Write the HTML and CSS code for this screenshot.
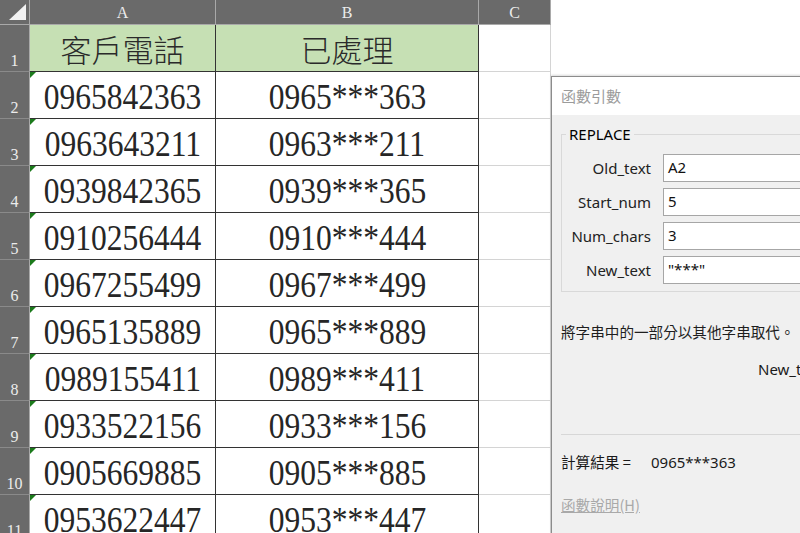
FILE: index.html
```html
<!DOCTYPE html>
<html lang="zh-Hant">
<head>
<meta charset="utf-8">
<title>REPLACE</title>
<link rel="stylesheet" href="styles.css">
</head>
<body>
<div class="sheet">
  <div class="corner"><svg width="30" height="25" viewBox="0 0 30 25"><polygon points="9,20 26,20 26,4" fill="#f2f2f2"/></svg></div>
  <div class="colhead">A</div>
  <div class="colhead">B</div>
  <div class="colhead last">C</div>

  <div class="rowhead">1</div>
  <div class="cell head">客戶電話</div>
  <div class="cell head colb">已處理</div>
  <div class="cell colc"></div>

  <div class="rowhead">2</div>
  <div class="cell warn"><span class="v">0965842363</span></div>
  <div class="cell colb"><span class="v">0965***363</span></div>
  <div class="cell colc"></div>

  <div class="rowhead">3</div>
  <div class="cell warn"><span class="v">0963643211</span></div>
  <div class="cell colb"><span class="v">0963***211</span></div>
  <div class="cell colc"></div>

  <div class="rowhead">4</div>
  <div class="cell warn"><span class="v">0939842365</span></div>
  <div class="cell colb"><span class="v">0939***365</span></div>
  <div class="cell colc"></div>

  <div class="rowhead">5</div>
  <div class="cell warn"><span class="v">0910256444</span></div>
  <div class="cell colb"><span class="v">0910***444</span></div>
  <div class="cell colc"></div>

  <div class="rowhead">6</div>
  <div class="cell warn"><span class="v">0967255499</span></div>
  <div class="cell colb"><span class="v">0967***499</span></div>
  <div class="cell colc"></div>

  <div class="rowhead">7</div>
  <div class="cell warn"><span class="v">0965135889</span></div>
  <div class="cell colb"><span class="v">0965***889</span></div>
  <div class="cell colc"></div>

  <div class="rowhead">8</div>
  <div class="cell warn"><span class="v">0989155411</span></div>
  <div class="cell colb"><span class="v">0989***411</span></div>
  <div class="cell colc"></div>

  <div class="rowhead">9</div>
  <div class="cell warn"><span class="v">0933522156</span></div>
  <div class="cell colb"><span class="v">0933***156</span></div>
  <div class="cell colc"></div>

  <div class="rowhead">10</div>
  <div class="cell warn"><span class="v">0905669885</span></div>
  <div class="cell colb"><span class="v">0905***885</span></div>
  <div class="cell colc"></div>

  <div class="rowhead">11</div>
  <div class="cell warn"><span class="v">0953622447</span></div>
  <div class="cell colb"><span class="v">0953***447</span></div>
  <div class="cell colc"></div>
</div>

<div class="dialog">
  <div class="titlebar">函數引數</div>
  <div class="dbody">
    <fieldset class="args">
      <legend>REPLACE</legend>
      <div class="arggrid">
        <label class="arglabel">Old_text</label><div class="argbox">A2</div>
        <label class="arglabel">Start_num</label><div class="argbox">5</div>
        <label class="arglabel">Num_chars</label><div class="argbox">3</div>
        <label class="arglabel">New_text</label><div class="argbox">"***"</div>
      </div>
    </fieldset>
    <p class="desc">將字串中的一部分以其他字串取代。</p>
    <p class="argdesc">New_text</p>
    <div class="sep"></div>
    <p class="result"><span class="reslabel">計算結果 =</span><span>0965***363</span></p>
    <a class="help">函數說明(H)</a>
  </div>
</div>
</body>
</html>
```

FILE: styles.css
```css
html, body {
  margin: 0;
  padding: 0;
  background: #ffffff;
  width: 800px;
  height: 533px;
  overflow: hidden;
}

.sheet {
  display: grid;
  grid-template-columns: 30px 186px 263px 72px;
  grid-template-rows: 25px repeat(11, 47px);
  width: 551px;
}

.corner {
  background: #6a6a6a;
  border-right: 1px solid #a9a9a9;
  border-bottom: 1px solid #a9a9a9;
  box-sizing: border-box;
  overflow: hidden;
}
.corner svg { display: block; }

.colhead {
  background: #6a6a6a;
  border-right: 1px solid #a9a9a9;
  border-bottom: 1px solid #a9a9a9;
  box-sizing: border-box;
  color: #ececec;
  font-family: "Liberation Serif", serif;
  font-size: 16px;
  display: flex;
  align-items: center;
  justify-content: center;
  padding-top: 1px;
}

.rowhead {
  background: #6a6a6a;
  border-right: 1px solid #a9a9a9;
  border-bottom: 1px solid #8a8a8a;
  box-sizing: border-box;
  color: #ececec;
  font-family: "Liberation Serif", serif;
  font-size: 16px;
  display: flex;
  align-items: flex-end;
  justify-content: center;
  line-height: 18px;
  padding-bottom: 1px;
}

.cell {
  position: relative;
  box-sizing: border-box;
  border-right: 1px solid #333333;
  border-bottom: 1px solid #333333;
  font-family: "Liberation Serif", "Noto Sans CJK TC", serif;
  font-size: 35px;
  color: #262626;
  display: flex;
  align-items: flex-end;
  justify-content: center;
  line-height: 38px;
  padding-bottom: 1px;
}

.cell .v {
  display: inline-block;
  transform: scaleX(0.9);
  white-space: nowrap;
}

.cell.head {
  background: #c6e0b4;
  font-family: "Noto Sans CJK TC", serif;
  font-weight: 300;
  font-size: 31px;
  line-height: 40px;
  padding-bottom: 2px;
  color: #2a2a2a;
}

.cell.colc {
  border-right: 1px solid #d4d4d4;
  border-bottom: 1px solid #d4d4d4;
}

.cell.warn::before {
  content: "";
  position: absolute;
  left: 0;
  top: 0;
  border-top: 6px solid #1b7a1b;
  border-right: 6px solid transparent;
}

/* dialog */
.dialog {
  position: absolute;
  left: 551px;
  top: 76px;
  width: 300px;
  height: 456px;
  border: 1px solid #8c8c8c;
  background: #f0f0f0;
  font-family: "Noto Sans", "Noto Sans CJK TC", sans-serif;
  color: #1a1a1a;
  box-shadow: 0 -1px 2px rgba(0, 0, 0, 0.15);
}

.titlebar {
  height: 38px;
  background: #ffffff;
  color: #9b9b9b;
  font-family: "Noto Sans CJK TC", sans-serif;
  font-size: 15px;
  line-height: 38px;
  padding-left: 9px;
}

.dbody {
  display: flex;
  flex-direction: column;
  padding-left: 9px;
}

.args {
  margin: 9px 0 0 0;
  padding: 0 0 7px 0;
  border: 1px solid #d9d9d9;
  border-right: none;
  min-width: 0;
}

.args legend {
  margin-left: 4px;
  padding: 0 3px;
  font-size: 15px;
  line-height: 20px;
  color: #000000;
}

.arggrid {
  display: grid;
  grid-template-columns: 89px 250px;
  column-gap: 12px;
  row-gap: 6px;
  margin-top: 10px;
}

.arglabel {
  text-align: right;
  font-size: 15px;
  line-height: 28px;
  color: #222222;
}

.argbox {
  height: 28px;
  box-sizing: border-box;
  border: 1px solid #a6a6a6;
  background: #ffffff;
  font-size: 15px;
  line-height: 24px;
  padding-left: 4px;
  color: #111111;
}

.desc {
  margin: 30px 0 0 0;
  font-family: "Noto Sans CJK TC", sans-serif;
  font-size: 14.6px;
  line-height: 20px;
  white-space: nowrap;
  color: #1e1e1e;
}

.argdesc {
  margin: 17px 0 0 197px;
  font-size: 15px;
  line-height: 20px;
  white-space: nowrap;
}

.sep {
  height: 1px;
  background: #d7d7d7;
  margin-top: 55px;
}

.result {
  margin: 17px 0 0 0;
  display: flex;
  font-size: 15px;
  line-height: 20px;
}

.reslabel {
  width: 90px;
  font-family: "Noto Sans CJK TC", sans-serif;
  font-size: 14.6px;
}

.help {
  margin-top: 23px;
  font-family: "Noto Sans CJK TC", sans-serif;
  font-size: 14.6px;
  line-height: 20px;
  color: #a9a9a9;
  text-decoration: underline;
  align-self: flex-start;
}
```
